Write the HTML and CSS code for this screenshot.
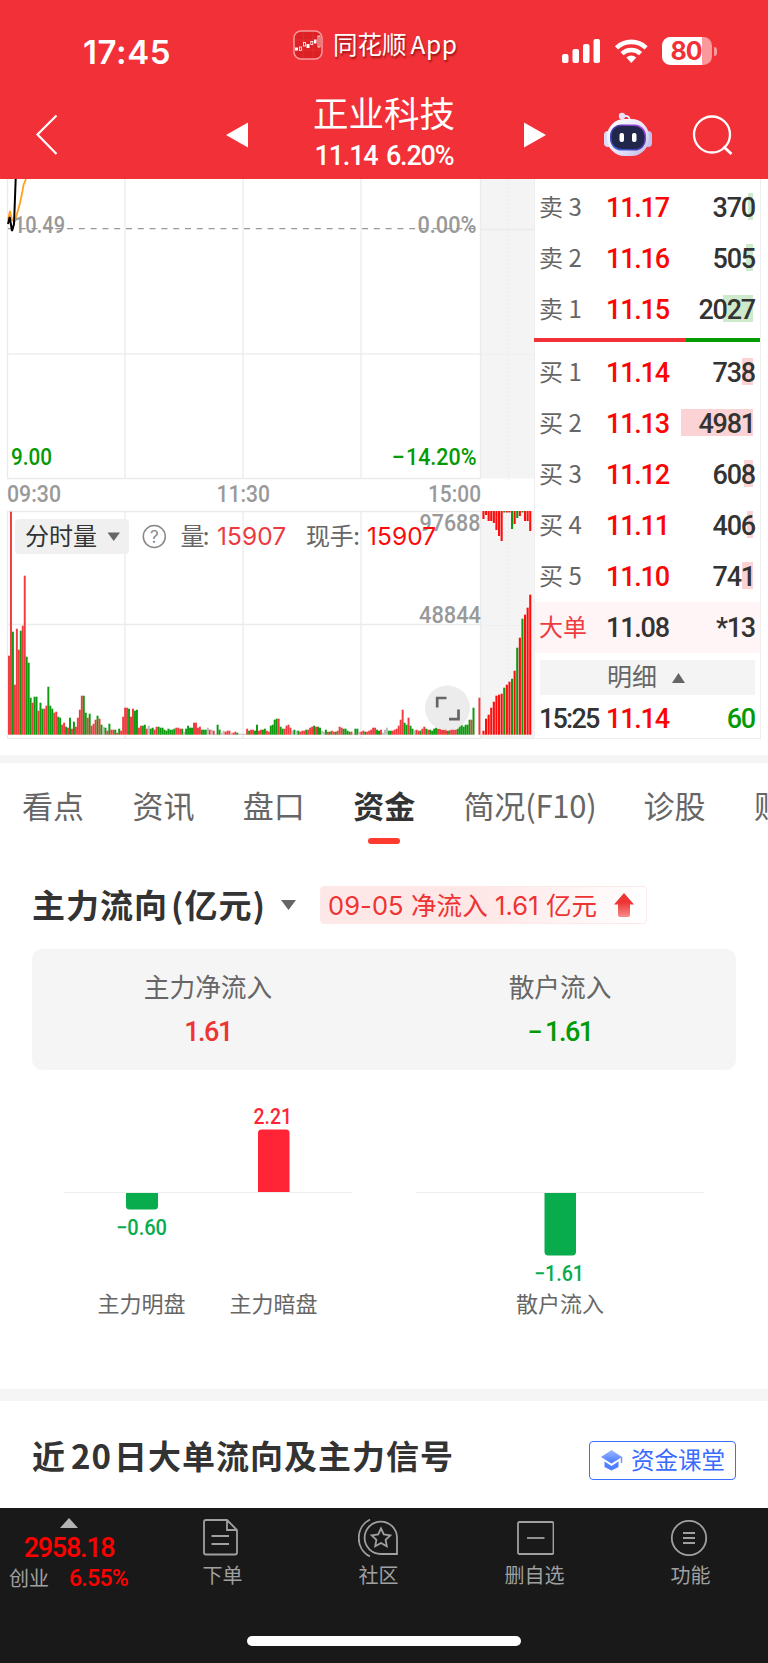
FILE: index.html
```html
<!DOCTYPE html>
<html lang="zh-CN">

<head>
    <meta charset="UTF-8">
    <meta name="viewport" content="width=device-width, initial-scale=1.0">
    <title>正业科技</title>
    <link rel="stylesheet" href="styles.css">
</head>

<body>
    <div class="header">
        <div class="status">
            <div class="time">17:45</div>
            <div class="app">
                <svg class="app-icon" width="30" height="30" viewBox="0 0 30 30">
                    <rect x="1" y="1" width="28" height="28" rx="7" fill="#dd2024" stroke="#f79a9c" stroke-width="1.5" />
                    <path d="M2 10H28M2 20H28M10 2V28M20 2V28" stroke="#e5393c" stroke-width=".6" />
                    <g fill="#fff">
                        <rect x="2" y="17.500" width="3" height="3" />
                        <rect x="13.500" y="14" width="3" height="4" />
                        <rect x="21" y="9.500" width="2.500" height="4" />
                    </g>
                    <g fill="none" stroke="#fff" stroke-width=".8">
                        <rect x="6.500" y="17" width="2" height="3.500" />
                        <rect x="10.500" y="12.500" width="2" height="3.500" />
                        <rect x="17.800" y="11.500" width="2" height="3" />
                        <rect x="25" y="6" width="2" height="11" />
                    </g>
                </svg>
                <span>同花顺<i>App</i></span>
            </div>
            <svg class="signal" width="151" height="30" viewBox="0 0 151 30">
                <g fill="#fff">
                    <rect x="0" y="18" width="6.500" height="9" rx="2" />
                    <rect x="10.500" y="13" width="6.500" height="14" rx="2" />
                    <rect x="21" y="8" width="6.500" height="19" rx="2" />
                    <rect x="31.500" y="3" width="6.500" height="24" rx="2" />
                </g>
                <g fill="none" stroke="#fff" stroke-width="4.600">
                    <path d="M54.500 11.800A21.500 21.500 0 0 1 84.100 11.800" />
                    <path d="M60 17.700A13.500 13.500 0 0 1 78.600 17.700" />
                </g>
                <path d="M64.300 21.500Q69.300 17.500 74.300 21.500L69.300 27Z" fill="#fff" />
                <rect x="100" y="1" width="50" height="28" rx="8.500" fill="#f9999c" />
                <path d="M140 1V29H108.500A8.500 8.500 0 0 1 100 20.500V9.500A8.500 8.500 0 0 1 108.500 1Z" fill="#fff" />
                <text class="battery" x="124.500" y="23.500" text-anchor="middle" textLength="32">80</text>
            </svg>
            <div class="battery-tip"></div>
        </div>
        <div class="nav">
            <svg class="back" width="24" height="44" viewBox="0 0 24 44">
                <path d="M21.500 2.500L2.500 21.500L21.500 41" fill="none" stroke="#fff" stroke-width="2.200" />
            </svg>
            <svg class="prev" width="22" height="26" viewBox="0 0 22 26">
                <path d="M22 .5V25.500L0 13Z" fill="#fff" />
            </svg>
            <div class="stock">
                <h1>正业科技</h1>
                <p>11.14 6.20%</p>
            </div>
            <svg class="next" width="22" height="26" viewBox="0 0 22 26">
                <path d="M0 .5V25.500L22 13Z" fill="#fff" />
            </svg>
            <svg class="robot" width="48" height="46" viewBox="0 0 48 46">
                <defs>
                    <linearGradient id="head" x1="0" y1="0" x2="1" y2="1">
                        <stop offset="0" stop-color="#fff" />
                        <stop offset=".6" stop-color="#e6e2fb" />
                        <stop offset="1" stop-color="#b9b5e2" />
                    </linearGradient>
                    <linearGradient id="face" x1="0" y1="1" x2="1" y2="0">
                        <stop offset="0" stop-color="#3f6be8" />
                        <stop offset=".5" stop-color="#42309f" />
                        <stop offset="1" stop-color="#c04df0" />
                    </linearGradient>
                </defs>
                <path d="M18 4H22Q26 4 25.500 9" fill="none" stroke="#ece6fa" stroke-width="2" />
                <circle cx="18" cy="4" r="3.200" fill="#e8e2fa" />
                <rect x="0" y="19" width="8" height="16" rx="4" fill="#dcdaf5" />
                <rect x="40" y="19" width="8" height="16" rx="4" fill="#c5bff0" />
                <rect x="3" y="7" width="42" height="37" rx="17.500" fill="url(#head)" />
                <rect x="6" y="12.500" width="36" height="26" rx="11.500" fill="url(#face)" />
                <rect x="7.500" y="14" width="33" height="23" rx="10" fill="#20274a" />
                <rect x="15.500" y="21" width="4.500" height="9" rx="2" fill="#fff" />
                <rect x="28" y="21" width="4.500" height="9" rx="2" fill="#fff" />
            </svg>
            <svg class="search" width="42" height="42" viewBox="0 0 42 42">
                <circle cx="20" cy="20.500" r="18" fill="none" stroke="#fff" stroke-width="2.300" />
                <path d="M31.500 32.500L39.500 40" stroke="#fff" stroke-width="2.800" />
            </svg>
        </div>
    </div>

    <div class="quote">
        <svg class="chart" width="534" height="560" viewBox="0 179 534 560">
            <rect x="481" y="179" width="53" height="299.500" fill="#f4f4f4" />
            <rect x="481" y="511" width="53" height="228" fill="#f4f4f4" />
            <g class="grid">
                <path d="M7.500 179V478.500H480.500V179M125 179V478M243 179V478M361 179V478M8 353.800H480" />
                <path d="M7.500 511.500H480.500V738.500H7.500ZM125 511V738M243 511V738M361 511V738M8 624.500H480" />
                <path d="M481 229.500H534M481 738.500H534" />
                <path class="dots" d="M508.500 179V480M481 354.500H534M508.500 511V738M481 625.500H534" />
            </g>
            <path d="M8 228.700H480" stroke="#999" stroke-width="1.300" stroke-dasharray="6 5.800" />
            <path d="M8 220L10 211L12 220L15 221L20 203L22.500 191L23.500 185L26 179" fill="none" stroke="#ffa21f" stroke-width="1.800" />
            <path d="M8 224L9.700 217L12 231L14 224L15.700 179" fill="none" stroke="#000" stroke-width="2" />
            <g class="axis">
                <text x="14" y="233" textLength="51" lengthAdjust="spacingAndGlyphs">10.49</text>
                <text x="417.500" y="233" textLength="59" lengthAdjust="spacingAndGlyphs">0.00%</text>
                <text class="down" x="11" y="464.800" textLength="41" lengthAdjust="spacingAndGlyphs">9.00</text>
                <text class="down" x="391.500" y="464.800" textLength="13">−</text>
                <text class="down" x="406" y="464.800" textLength="70.500" lengthAdjust="spacingAndGlyphs">14.20%</text>
                <text x="7" y="502" textLength="54" lengthAdjust="spacingAndGlyphs">09:30</text>
                <text x="216.500" y="502" textLength="53.500" lengthAdjust="spacingAndGlyphs">11:30</text>
                <text x="428" y="502" textLength="53" lengthAdjust="spacingAndGlyphs">15:00</text>
            </g>
            <g id="volume"></g>
            <g id="depth"></g>
            <g class="axis">
                <text x="419.500" y="530.800" textLength="61" lengthAdjust="spacingAndGlyphs">97688</text>
                <text x="419" y="622.800" textLength="62" lengthAdjust="spacingAndGlyphs">48844</text>
            </g>
            <rect x="15" y="519" width="114" height="35" rx="4" fill="#f0f0f0" />
            <text class="tool dark" x="25" y="544.500">分时量</text>
            <path d="M107.500 532.500H120L113.700 541Z" fill="#666" />
            <circle cx="154.300" cy="536.500" r="11" fill="none" stroke="#888" stroke-width="1.500" />
            <text class="help" x="154.300" y="542.500" text-anchor="middle">?</text>
            <text class="tool" x="180.500" y="544.500" textLength="29">量:</text>
            <text class="num" x="217" y="544.500" textLength="69" fill="#eb3b3f">15907</text>
            <text class="tool" x="306" y="544.500" textLength="54">现手:</text>
            <text class="num" x="367" y="544.500" textLength="69" fill="#fa0a0a">15907</text>
            <circle cx="447.500" cy="708" r="22.500" fill="#e9e9e9" fill-opacity=".88" />
            <path d="M446.500 698H437.200V707.500M449 719.200H458.500V709.500" fill="none" stroke="#666" stroke-width="2.700" />
        </svg>
        <div class="book">
            <div class="row"><span>卖 3</span><b>11.17</b><em class="sell"><i style="width:5px"></i>370</em></div>
            <div class="row"><span>卖 2</span><b>11.16</b><em class="sell"><i style="width:7px"></i>505</em></div>
            <div class="row"><span>卖 1</span><b>11.15</b><em class="sell"><i style="width:30px"></i>2027</em></div>
            <div class="ratio"></div>
            <div class="row"><span>买 1</span><b>11.14</b><em><i style="width:11px"></i>738</em></div>
            <div class="row"><span>买 2</span><b>11.13</b><em><i style="width:72px"></i>4981</em></div>
            <div class="row"><span>买 3</span><b>11.12</b><em><i style="width:9px"></i>608</em></div>
            <div class="row"><span>买 4</span><b>11.11</b><em><i style="width:6px"></i>406</em></div>
            <div class="row"><span>买 5</span><b>11.10</b><em><i style="width:11px"></i>741</em></div>
            <div class="row big"><span>大单</span><b>11.08</b><em>*13</em></div>
            <div class="detail"><span>明细</span>
                <svg width="13" height="10" viewBox="0 0 13 10"><path d="M0 10H13L6.500 0Z" fill="#666" /></svg>
            </div>
            <div class="row last"><span>15:25</span><b>11.14</b><em>60</em></div>
        </div>
    </div>

    <div class="tabs">
        <div>看点</div>
        <div>资讯</div>
        <div>盘口</div>
        <div class="active">资金</div>
        <div class="wide">简况(F10)</div>
        <div>诊股</div>
        <div>财务</div>
    </div>

    <div class="flow">
        <div class="flow-title">
            <h2>主力流向<span>(亿元)</span></h2>
            <svg class="drop" width="15" height="10" viewBox="0 0 15 10"><path d="M0 0H15L7.500 10Z" fill="#666" /></svg>
            <div class="badge">
                <span>09-05 净流入 1.61 亿元</span>
                <svg width="20" height="24" viewBox="0 0 20 24">
                    <defs>
                        <linearGradient id="up" x1="0" y1="0" x2="0" y2="1">
                            <stop offset=".4" stop-color="#ee3535" />
                            <stop offset="1" stop-color="#f78d8d" />
                        </linearGradient>
                    </defs>
                    <path d="M10 0L20 11.500H16V22Q16 24 14 24H6Q4 24 4 22V11.500H0Z" fill="url(#up)" />
                </svg>
            </div>
        </div>
        <div class="summary">
            <div>
                <p>主力净流入</p>
                <b class="up">1.61</b>
            </div>
            <div>
                <p>散户流入</p>
                <b class="down">−<s></s>1.61</b>
            </div>
        </div>
        <svg class="bars" width="704" height="240" viewBox="32 1090 704 240">
            <path d="M64 1192.500H352M416 1192.500H704" stroke="#eee" />
            <path d="M126 1193H158V1206Q158 1209.500 154.500 1209.500H129.500Q126 1209.500 126 1206Z" fill="#08ac4c" />
            <path d="M258 1192V1133Q258 1129.500 261.500 1129.500H286Q289.500 1129.500 289.500 1133V1192Z" fill="#ff2536" />
            <path d="M544.500 1193H576V1251.500Q576 1255.500 572.500 1255.500H548Q544.500 1255.500 544.500 1251.500Z" fill="#08ac4c" />
            <g class="bar-num">
                <text x="116" y="1235" textLength="51" lengthAdjust="spacingAndGlyphs" fill="#08ac4c">−0.60</text>
                <text x="253.500" y="1123.500" textLength="38.500" lengthAdjust="spacingAndGlyphs" fill="#ff2536">2.21</text>
                <text x="534" y="1281" textLength="50" lengthAdjust="spacingAndGlyphs" fill="#08ac4c">−1.61</text>
            </g>
            <g class="bar-name">
                <text x="97.500" y="1312">主力明盘</text>
                <text x="229.500" y="1312">主力暗盘</text>
                <text x="516" y="1312">散户流入</text>
            </g>
        </svg>
    </div>

    <div class="recent">
        <h2>近<span>20</span>日大单流向及主力信号</h2>
        <div class="lesson">
            <svg width="22" height="21" viewBox="0 0 22 21">
                <defs>
                    <linearGradient id="cap" x1="0" y1="0" x2="0" y2="1">
                        <stop offset="0" stop-color="#9db8ff" />
                        <stop offset="1" stop-color="#4377ff" />
                    </linearGradient>
                </defs>
                <path d="M0 7L10.500 0L21 7L10.500 13.500Z" fill="url(#cap)" />
                <path d="M3.500 11.500L10.500 16L17.500 11.500V17L10.500 20.500L3.500 17Z" fill="#5080ff" />
                <path d="M20.500 7V13" stroke="#6f96ff" stroke-width="1.500" />
            </svg>
            <span>资金课堂</span>
        </div>
    </div>

    <div class="footer">
        <div class="index">
            <svg width="18" height="10" viewBox="0 0 18 10"><path d="M0 10H18L9 0Z" fill="#b4b4b4" /></svg>
            <b>2958.18</b>
            <p><span>创业</span><em>6.55%</em></p>
        </div>
        <div class="item">
            <svg width="40" height="40" viewBox="0 0 40 40">
                <path d="M4 2H25L35 12V34.500Q35 36.500 33 36.500H4Q2 36.500 2 34.500V4Q2 2 4 2ZM25 2V12H35M9.500 18H27M9.500 26H27" />
            </svg>
            <span>下单</span>
        </div>
        <div class="item">
            <svg width="40" height="40" viewBox="0 0 40 40">
                <path d="M39 36H23A16.200 16.200 0 1 1 39 20ZM12 1.500C-3 9 -3 31 12 38.500" />
                <path d="M23 10.500L25.800 16.500L32.300 17.300L27.600 21.800L28.800 28.200L23 25L17.200 28.200L18.400 21.800L13.700 17.300L20.200 16.500Z" />
            </svg>
            <span>社区</span>
        </div>
        <div class="item">
            <svg width="40" height="40" viewBox="0 0 40 40">
                <rect x="4" y="4" width="35.500" height="32" rx="1.500" />
                <path d="M13 20H30.500" />
            </svg>
            <span>删自选</span>
        </div>
        <div class="item">
            <svg width="40" height="40" viewBox="0 0 40 40">
                <circle cx="19" cy="20" r="17.200" />
                <path d="M13 15H25M13 20H25M13 25H25" />
            </svg>
            <span>功能</span>
        </div>
        <div class="home"></div>
    </div>

    <script>
        var NS = "http://www.w3.org/2000/svg";
        var colors = { r: "#ee3d40", g: "#0f9a12", x: "#bbb", R: "#ff0d0d", G: "#0f9a12" };

        function addBar(parent, x, y, w, h, color) {
            var rect = document.createElementNS(NS, "rect");
            rect.setAttribute("x", x);
            rect.setAttribute("y", y);
            rect.setAttribute("width", w);
            rect.setAttribute("height", h);
            rect.setAttribute("fill", color);
            parent.appendChild(rect);
        }

        // 每分钟成交量: 颜色 + 高度
        var volume = "r79 r223 g103 r50 r106 r85 g104 r109 r159 g78 g72 g37 r32 g38 g38 r24 g32 g26 r26 r29 g48 g29 g26 r22 r23 g18 g17 r10 r12 g8 " +
            "r7 g17 r6 g13 r8 r17 r25 r39 g39 g22 r17 g21 r9 r11 r15 g19 r16 g10 x8 g7 r4 g11 r5 r5 g5 r2 g6 r4 r18 r27 r27 g26 r18 r26 g24 g25 " +
            "r7 r9 g9 g10 r6 x9 g6 g7 r5 r8 g8 g7 g7 g5 g4 g6 g5 g5 g6 r7 r7 r6 g6 x3 g6 g9 g7 g7 r12 r12 r7 r8 g5 g5 g5 x7 r5 x5 r4 x1 g10 g5 x2 x4 " +
            "r3 r4 r4 x2 r2 r3 g2 x1 x1 x1 x1 r6 g4 r5 r5 g4 g10 r4 r5 g5 g6 r4 r3 g9 g10 g15 g16 r16 g8 g6 r6 r9 r10 r7 x4 g5 x4 g4 r3 r4 r4 g5 r5 r7 " +
            "r8 g9 r8 g8 g7 x4 x3 g5 r3 g3 r4 r3 g3 r4 r8 r7 g6 g6 g4 g3 r3 x1 g6 g6 x3 r3 r4 g3 r3 r4 r5 r7 r7 g5 g4 r5 x2 x5 x7 g4 g4 r4 r5 r6 r9 " +
            "r15 r25 g12 g10 r17 g9 g6 x4 r5 r4 g4 r6 r8 g6 r5 g5 g4 g6 g7 r6 r6 r5 r6 r6 g4 r5 r6 r5 r5 g6 g9 g10 g8 g10 g10 g15 r15 g27 x0 x0 r37";
        volume = volume.split(" ");
        // 整个交易时段占 472px
        var step = 472.4 / volume.length;
        var box = document.querySelector("#volume");
        for (var i = 0; i < volume.length; i++) {
            var h = +volume[i].slice(1);
            addBar(box, 8 + i * step, 734.7 - h, step, h, colors[volume[i][0]]);
        }

        // 盘后竖条, 上下两组
        var bottom = "R4 R16 R20 R27 R33 R39 R40 R41 G47 R50 R53 G56 R64 G87 R97 G116 R120 R127 R140".split(" ");
        var upper = "R8 R4 R10 R10 R12 R19 R25 R30 G1.5 R1.5 R1.5 G18 R13 G7 R5 G1.5 R10 R10 R20".split(" ");
        box = document.querySelector("#depth");
        for (var i = 0; i < 19; i++) {
            addBar(box, 482.4 + i * 2.6, 734.7 - bottom[i].slice(1), 2.1, bottom[i].slice(1), colors[bottom[i][0]]);
            addBar(box, 482.4 + i * 2.6, 511, 2.1, upper[i].slice(1), colors[upper[i][0]]);
        }
    </script>
</body>

</html>
```
FILE: styles.css
```css
* {
    padding: 0;
    margin: 0;
    box-sizing: border-box;
}

body {
    width: 768px;
    height: 1663px;
    overflow: hidden;
    background-color: #fff;
    color: #333;
    font-family: "Noto Sans CJK SC", sans-serif;
}

i,
em {
    font-style: normal;
}

/* 头部 */
.header {
    height: 179px;
    background-color: #f23038;
    color: #fff;
}

.status {
    height: 90px;
    padding: 30px 51px 0 83px;
    display: flex;
    align-items: flex-start;
}

.time {
    width: 210px;
    padding-top: 2px;
    font: 600 33px/40px Inter, sans-serif;
    letter-spacing: 0.6px;
}

.app {
    width: 269px;
    display: flex;
    gap: 10px;
    font-size: 24.500px;
    line-height: 28px;
    text-shadow: 1px 2px 2px rgba(90, 0, 0, 0.6);
}

.app i {
    margin-left: 4px;
    letter-spacing: 0.6px;
}

.signal {
    margin-top: 6px;
    flex: none;
}

.battery {
    font: 700 25px Inter, sans-serif;
    fill: #f23038;
}

.battery-tip {
    width: 3px;
    height: 9px;
    margin: 17px 0 0 1px;
    border-radius: 0 4px 4px 0;
    background-color: #f9999c;
}

.nav {
    height: 89px;
    padding-left: 35px;
    display: flex;
    align-items: center;
}

.nav svg {
    flex: none;
}

.prev {
    margin-left: 167px;
}

.stock {
    width: 276px;
    padding-right: 4px;
    text-align: center;
}

.stock h1 {
    margin-top: -4px;
    font-size: 35.500px;
    font-weight: 400;
    line-height: 46px;
}

.stock p {
    margin-top: 1px;
    font: 500 27px/40px Roboto, sans-serif;
    letter-spacing: -1.2px;
    word-spacing: 3px;
}

.robot {
    margin-left: 58px;
}

.search {
    margin-left: 40px;
}

/* 分时图 + 盘口 */
.quote {
    height: 584px;
    display: flex;
    border-bottom: 8px solid #f5f5f5;
}

.chart {
    flex: none;
}

.grid path {
    fill: none;
    stroke: #ebebeb;
    stroke-width: 1.3;
}

.grid .dots {
    stroke-dasharray: 2 2;
    stroke-width: 1;
}

.axis text {
    font: 500 23.5px Roboto, sans-serif;
    fill: #999;
}

.axis .down {
    fill: #049a04;
}

.tool {
    font-size: 24px;
    fill: #666;
}

.dark {
    fill: #333;
}

.help {
    font: 17px Inter, sans-serif;
    fill: #888;
}

.num {
    font: 24.5px Inter, sans-serif;
}

.book {
    width: 227px;
    height: 560px;
    padding-top: 3px;
    border: solid #eee;
    border-width: 0 1px 1px;
}

.row {
    height: 51px;
    padding: 0 5px 0 4px;
    display: flex;
    align-items: center;
    white-space: nowrap;
}

.row span {
    width: 67px;
    font-size: 24px;
    line-height: 30px;
    padding-bottom: 4px;
    color: #666;
}

.row b,
.row em {
    padding-top: 1px;
    font: 500 27px/27px Roboto, sans-serif;
    letter-spacing: -1.2px;
}

.row b {
    color: #fb0505;
}

.row em {
    position: relative;
    flex: 1;
    text-align: right;
}

/* 挂单量底色 */
.row i {
    position: absolute;
    z-index: -1;
    top: -1px;
    right: 2px;
    height: 27px;
    background-color: #fbd3d5;
}

.row .sell i {
    background-color: #cdeacd;
}

.ratio {
    height: 4px;
    margin: 3px 0 5px -1px;
    background: linear-gradient(90deg, #f23038 152px, #049a04 152px);
}

.big {
    background-color: #fff5f6;
}

.row.big span {
    color: #ee3d40;
}

.row.big b {
    color: #333;
}

.detail {
    height: 35px;
    margin: 7px 5px 0 5px;
    padding-left: 67px;
    display: flex;
    align-items: center;
    gap: 15px;
    background-color: #f4f4f4;
    font-size: 25px;
    line-height: 31px;
    color: #666;
}

.detail span {
    padding-bottom: 4px;
}

.last {
    height: 48px;
}

.row.last span {
    padding: 1px 0 0;
    font: 500 27px/27px Roboto, sans-serif;
    letter-spacing: -1.8px;
    color: #333;
}

.last em {
    color: #049a04;
}

/* 标签栏 */
.tabs {
    height: 101px;
    padding: 20px 0 0 22px;
    display: flex;
    gap: 48px;
    overflow: hidden;
    font-size: 31px;
    line-height: 43px;
    white-space: nowrap;
    color: #666;
}

.tabs div {
    flex: none;
    width: 62.4px;
}

.tabs .wide {
    width: 132px;
    letter-spacing: -0.2px;
}

.tabs .active {
    font-weight: 700;
    color: #333;
}

.tabs .active::after {
    content: "";
    display: block;
    width: 32px;
    height: 6px;
    margin: 11.5px auto 0;
    border-radius: 3px;
    background-color: #ff3b30;
}

/* 资金流向 */
.flow {
    height: 537px;
    padding: 22px 32px 0;
    border-bottom: 12px solid #f5f5f5;
}

.flow-title {
    height: 38px;
    display: flex;
    align-items: center;
}

h2 {
    font-size: 33px;
    font-weight: 700;
    letter-spacing: 1px;
    white-space: nowrap;
}

.flow-title h2 {
    width: 249px;
    padding-bottom: 3px;
}

.flow-title h2 span {
    margin-left: 3px;
}

.drop {
    margin-right: 24px;
}

.badge {
    width: 327px;
    height: 38px;
    padding: 0 12px 0 7px;
    display: flex;
    justify-content: space-between;
    align-items: center;
    border: 1px solid #fde9e9;
    border-radius: 4px;
    background: linear-gradient(90deg, #fee7e7 50%, #fff);
    font-family: Inter, "Noto Sans CJK SC", sans-serif;
    font-size: 25.500px;
    white-space: nowrap;
    color: #ee3333;
}

.badge span {
    padding-bottom: 4px;
    letter-spacing: 0.1px;
}

.summary {
    height: 121px;
    margin-top: 25px;
    padding-top: 17px;
    display: flex;
    border-radius: 10px;
    background-color: #f5f5f5;
    text-align: center;
}

.summary div {
    flex: 1;
}

.summary p {
    font-size: 25.7px;
    line-height: 40px;
    color: #666;
}

.summary b {
    display: block;
    margin-top: 10px;
    font: 500 27px/32px Roboto, sans-serif;
    letter-spacing: -1.5px;
}

.summary s {
    padding-left: 4px;
}

.up {
    color: #ee3333;
}

.down {
    color: #049a04;
}

.bars {
    display: block;
    margin-top: 20px;
}

.bar-num {
    font: 500 21.5px Roboto, sans-serif;
}

.bar-name {
    font-size: 22px;
    fill: #666;
}

.recent {
    height: 107px;
    padding: 0 32px;
    display: flex;
    justify-content: space-between;
    align-items: center;
}

.recent h2 span {
    margin: 0 2px 0 5px;
}

.lesson {
    width: 147px;
    height: 39px;
    margin-top: 12px;
    padding-left: 11px;
    display: flex;
    align-items: center;
    gap: 8px;
    border: 1px solid #3d6eff;
    border-radius: 4px;
    font-size: 23.500px;
    line-height: 30px;
    color: #3a6bff;
}

.lesson span {
    padding-bottom: 3px;
}

/* 底部 */
.footer {
    position: relative;
    height: 155px;
    display: flex;
    background-color: #191919;
    font-size: 20px;
    color: #a0a0a0;
}

.index {
    width: 144px;
    padding: 10px 6px 0 0;
    text-align: center;
}

.index svg {
    display: block;
    margin: 0 auto;
}

.index b {
    display: block;
    margin-top: 4px;
    font: 500 27px/32px Roboto, sans-serif;
    letter-spacing: -1.3px;
    color: #f00;
}

.index p {
    padding-left: 9px;
    display: flex;
    gap: 20px;
    line-height: 27px;
}

.index em {
    margin-top: 4px;
    font: 500 23px/22px Roboto, sans-serif;
    letter-spacing: -0.7px;
    color: #f00;
}

.item {
    width: 156px;
    padding-top: 10px;
    text-align: center;
}

.item svg {
    display: block;
    margin: 0 auto;
    fill: none;
    stroke: #a0a0a0;
    stroke-width: 1.8;
}

.item span {
    display: block;
    margin-top: 3px;
    padding-left: 1px;
    line-height: 27px;
}

.home {
    position: absolute;
    left: 247px;
    bottom: 17px;
    width: 274px;
    height: 10px;
    border-radius: 5px;
    background-color: #fff;
}
```
